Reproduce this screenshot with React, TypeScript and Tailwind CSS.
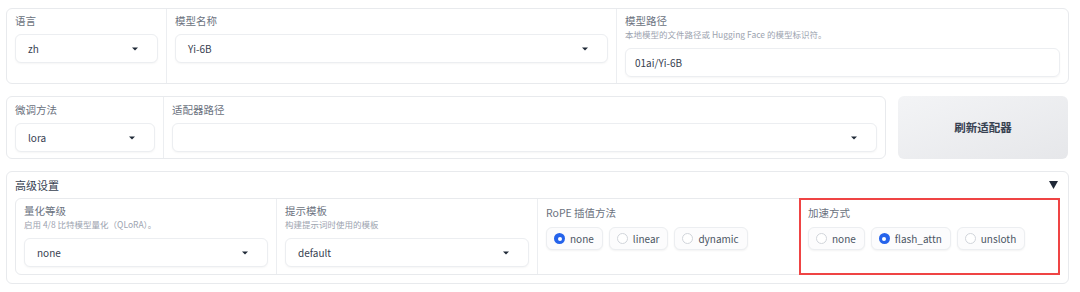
import type { ReactNode } from 'react'

const font = { fontFamily: '"Noto Sans CJK SC", "Noto Sans", sans-serif' }

function Caret() {
  return (
    <svg width="6" height="4" viewBox="0 0 6 4" className="shrink-0">
      <path d="M0 0.5h6L3 3.5z" fill="#1f2937" />
    </svg>
  )
}

function Select({ value, className = '' }: { value?: string; className?: string }) {
  return (
    <div
      className={`flex items-center justify-between h-[29px] pl-[12px] pr-[19px] rounded-[6px] border border-[#eceef1] bg-white shadow-[0_1px_2px_rgba(0,0,0,0.04)] text-[10px] text-[#374151] ${className}`}
    >
      <span>{value}</span>
      <Caret />
    </div>
  )
}

function Label({ children }: { children: ReactNode }) {
  return <div className="text-[10.5px] leading-[14px] text-[#6b7280]">{children}</div>
}

function Hint({ children }: { children: ReactNode }) {
  return <div className="text-[8.5px] leading-[12px] text-[#9ca3af]">{children}</div>
}

function Radio({ label, checked }: { label: string; checked?: boolean }) {
  return (
    <div className="flex items-center gap-[5px] h-[23px] pl-[7px] pr-[8px] rounded-[6px] border border-[#eceef1] bg-[#fcfcfd] shadow-[0_1px_2px_rgba(0,0,0,0.05)] text-[10px] text-[#4b5563]">
      {checked ? (
        <span className="w-[11px] h-[11px] rounded-full bg-[#2563eb] flex items-center justify-center">
          <span className="w-[4px] h-[4px] rounded-full bg-white" />
        </span>
      ) : (
        <span className="w-[11px] h-[11px] rounded-full border border-[#d1d5db] bg-white" />
      )}
      <span>{label}</span>
    </div>
  )
}

export default function App() {
  return (
    <div className="w-[1080px] h-[292px] bg-white" style={font}>
      <div className="ml-[6px] w-[1063px] pt-[8px] flex flex-col gap-[12px]">
        {/* model row */}
        <div className="flex rounded-[6px] border border-[#e8eaed]">
          <div className="w-[160px] border-r border-[#eceef1] px-[8px] pt-[5px]">
            <Label>语言</Label>
            <Select value="zh" className="mt-[6px]" />
          </div>
          <div className="w-[450px] border-r border-[#eceef1] px-[8px] pt-[5px]">
            <Label>模型名称</Label>
            <Select value="Yi-6B" className="mt-[6px]" />
          </div>
          <div className="flex-1 px-[8px] pt-[5px] pb-[6px]">
            <Label>模型路径</Label>
            <Hint>本地模型的文件路径或 Hugging Face 的模型标识符。</Hint>
            <div className="mt-[8px] h-[29px] flex items-center px-[9px] rounded-[6px] border border-[#eceef1] shadow-[0_1px_2px_rgba(0,0,0,0.04)] text-[10px] text-[#374151]">
              01ai/Yi-6B
            </div>
          </div>
        </div>

        {/* adapter row */}
        <div className="flex gap-[12px]">
          <div className="flex w-[880px] h-[63px] rounded-[6px] border border-[#e8eaed]">
            <div className="w-[157px] border-r border-[#eceef1] px-[8px] pt-[6px]">
              <Label>微调方法</Label>
              <Select value="lora" className="mt-[6px]" />
            </div>
            <div className="flex-1 px-[8px] pt-[6px]">
              <Label>适配器路径</Label>
              <Select className="mt-[6px]" />
            </div>
          </div>
          <button className="w-[170px] h-[63px] rounded-[6px] bg-gradient-to-br from-[#f3f4f6] to-[#e6e7ea] text-[11.5px] font-bold text-[#374151]">
            刷新适配器
          </button>
        </div>

        {/* advanced */}
        <div className="rounded-[6px] border border-[#e8eaed] px-[8px] pb-[8px] h-[113px]">
          <div className="flex items-center justify-between h-[26px]">
            <span className="text-[11px] text-[#374151]">高级设置</span>
            <svg width="9" height="8" viewBox="0 0 9 8" className="mr-[2px]">
              <path d="M0 0h9L4.5 8z" fill="#1f2937" />
            </svg>
          </div>
          <div className="flex h-[77px] rounded-[6px] border border-[#e8eaed]">
            <div className="w-[261px] border-r border-[#eceef1] px-[8px] pt-[5px]">
              <Label>量化等级</Label>
              <Hint>启用 4/8 比特模型量化（QLoRA）。</Hint>
              <Select value="none" className="mt-[8px]" />
            </div>
            <div className="w-[261px] border-r border-[#eceef1] px-[8px] pt-[5px]">
              <Label>提示模板</Label>
              <Hint>构建提示词时使用的模板</Hint>
              <Select value="default" className="mt-[8px]" />
            </div>
            <div className="w-[261px] px-[8px] pt-[7px]">
              <Label>RoPE 插值方法</Label>
              <div className="flex gap-[6px] mt-[7px]">
                <Radio label="none" checked />
                <Radio label="linear" />
                <Radio label="dynamic" />
              </div>
            </div>
            <div className="flex-1 border-2 border-[#ef4444] -my-[1px] -mr-[1px] px-[7px] pt-[6px]">
              <Label>加速方式</Label>
              <div className="flex gap-[6px] mt-[7px]">
                <Radio label="none" />
                <Radio label="flash_attn" checked />
                <Radio label="unsloth" />
              </div>
            </div>
          </div>
        </div>
      </div>
    </div>
  )
}
